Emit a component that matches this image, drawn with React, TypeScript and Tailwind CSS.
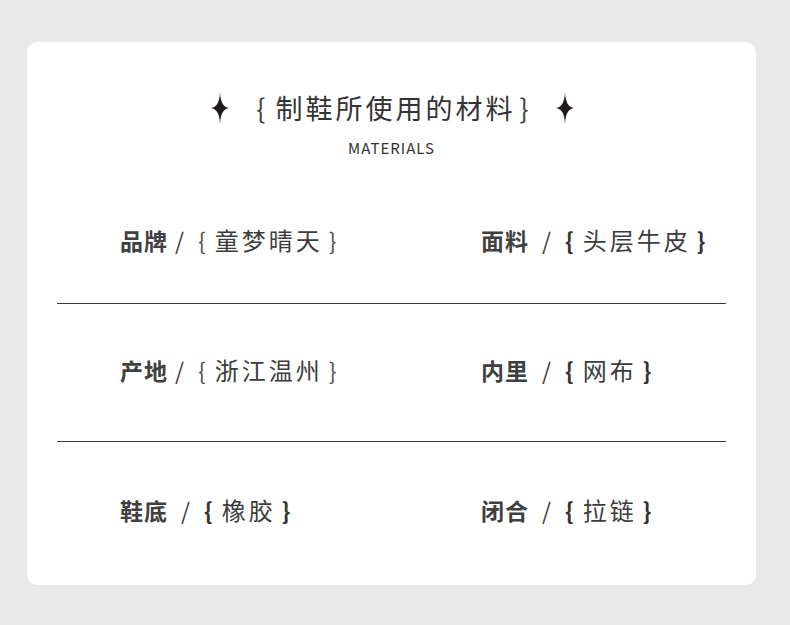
import React from "react";

const Sparkle = () => (
  <svg width="20" height="32" viewBox="0 0 20 32" className="block">
    <path d="M10 0 Q10.6 15 19 16 Q10.6 17 10 32 Q9.4 17 1 16 Q9.4 15 10 0Z" fill="#1f1a1c" />
  </svg>
);

const font = "[font-family:'Noto_Sans_CJK_SC','Noto_Sans',sans-serif]";

type ItemProps = {
  label: string;
  value: string;
  boldBrace?: boolean;
  wide?: boolean;
};

const Item = ({ label, value, boldBrace, wide }: ItemProps) => (
  <div className={`flex items-center h-[30px] text-[23px] leading-[30px] text-[#333] ${font}`}>
    <span className="font-bold tracking-[1px] text-[#404040]">{label}</span>
    <span className={`${wide ? "ml-[13px]" : "ml-[7px]"} font-normal text-[#3a3a3a]`}>/</span>
    <span className={`ml-[14px] ${boldBrace ? "font-bold text-[#333]" : "font-normal text-[#555]"}`}>{"{"}</span>
    <span className="ml-[9px] text-[24px] font-normal tracking-[3px] text-[#3c3c3c]">{value}</span>
    <span className={`ml-[6px] ${boldBrace ? "font-bold text-[#333]" : "font-normal text-[#555]"}`}>{"}"}</span>
  </div>
);

export default function App() {
  return (
    <div className="w-[790px] h-[625px] bg-[#e8e9e8] pt-[42px] pl-[27px]">
      <div className="w-[729px] h-[543px] bg-white rounded-[10px] pt-[46px] flex flex-col">
        <div className="h-[40px] flex items-center justify-center">
          <div className="ml-[2px]"><Sparkle /></div>
          <div className={`ml-[26px] mr-[26px] flex items-center text-[27px] leading-[40px] text-[#333] font-normal ${font}`}>
            <span className="text-[#444]">{"{"}</span>
            <span className="ml-[10px] tracking-[3px]">制鞋所使用的材料</span>
            <span className="ml-[4px] text-[#444]">{"}"}</span>
          </div>
          <Sparkle />
        </div>
        <div className={`mt-[10px] h-[20px] flex items-center justify-center text-[15px] tracking-[1px] text-[#333] ${font}`}>
          MATERIALS
        </div>

        <div className="pt-[67px] h-[145px] grid grid-cols-[361px_1fr] pl-[93px]">
          <Item label="品牌" value="童梦晴天" />
          <Item label="面料" value="头层牛皮" boldBrace wide />
        </div>
        <div className="mx-[30px] h-px bg-[#3a3a3a]" />
        <div className="pt-[51px] h-[137px] grid grid-cols-[361px_1fr] pl-[93px]">
          <Item label="产地" value="浙江温州" />
          <Item label="内里" value="网布" boldBrace wide />
        </div>
        <div className="mx-[30px] h-px bg-[#3a3a3a]" />
        <div className="pt-[53px] grid grid-cols-[361px_1fr] pl-[93px]">
          <Item label="鞋底" value="橡胶" boldBrace wide />
          <Item label="闭合" value="拉链" boldBrace wide />
        </div>
      </div>
    </div>
  );
}
